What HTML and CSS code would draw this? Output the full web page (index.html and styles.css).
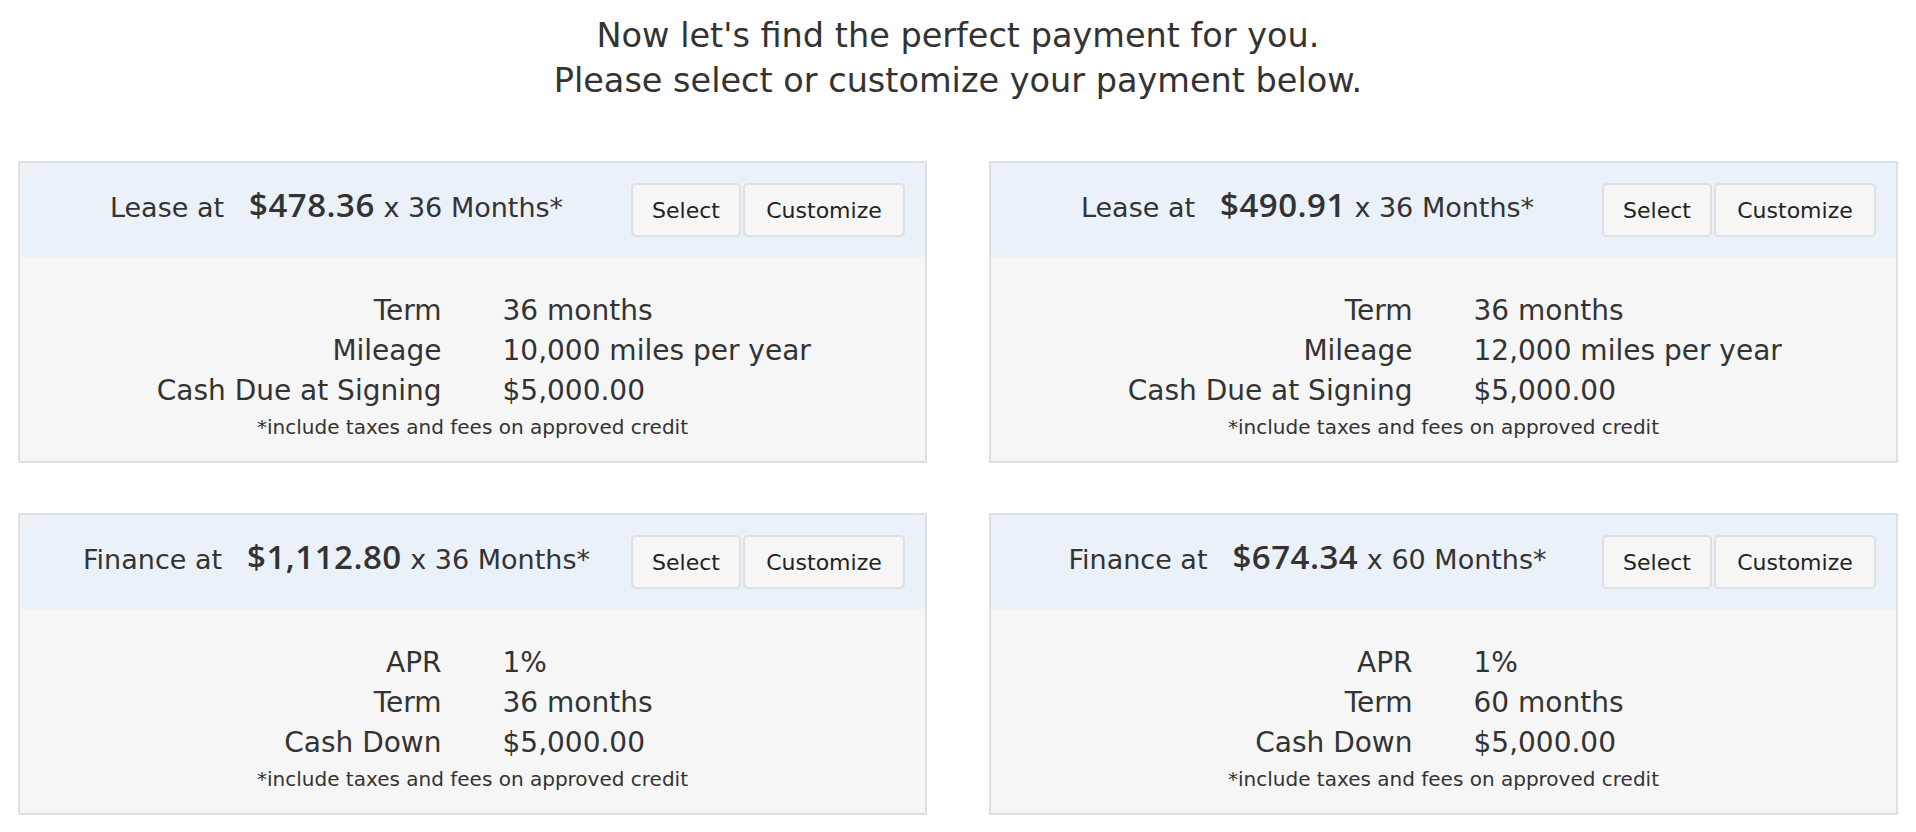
FILE: index.html
```html
<!DOCTYPE html>
<html lang="en">
<head>
<meta charset="utf-8">
<title>Payment options</title>
<link rel="stylesheet" href="styles.css">
</head>
<body>
<div class="page">
  <h1 class="intro">Now let's find the perfect payment for you.<br>Please select or customize your payment below.</h1>
  <div class="grid">
    <section class="card">
      <div class="card-head">
        <div class="summary"><span class="kind">Lease at</span><span class="price">$478.36</span> x 36 Months*</div>
        <div class="actions"><button class="btn btn-select">Select</button><button class="btn btn-customize">Customize</button></div>
      </div>
      <div class="card-body">
        <div class="rows">
          <div class="lbl">Term</div><div class="val">36 months</div>
          <div class="lbl">Mileage</div><div class="val">10,000 miles per year</div>
          <div class="lbl">Cash Due at Signing</div><div class="val">$5,000.00</div>
        </div>
        <p class="note">*include taxes and fees on approved credit</p>
      </div>
    </section>
    <section class="card">
      <div class="card-head">
        <div class="summary"><span class="kind">Lease at</span><span class="price">$490.91</span> x 36 Months*</div>
        <div class="actions"><button class="btn btn-select">Select</button><button class="btn btn-customize">Customize</button></div>
      </div>
      <div class="card-body">
        <div class="rows">
          <div class="lbl">Term</div><div class="val">36 months</div>
          <div class="lbl">Mileage</div><div class="val">12,000 miles per year</div>
          <div class="lbl">Cash Due at Signing</div><div class="val">$5,000.00</div>
        </div>
        <p class="note">*include taxes and fees on approved credit</p>
      </div>
    </section>
    <section class="card">
      <div class="card-head">
        <div class="summary"><span class="kind">Finance at</span><span class="price">$1,112.80</span> x 36 Months*</div>
        <div class="actions"><button class="btn btn-select">Select</button><button class="btn btn-customize">Customize</button></div>
      </div>
      <div class="card-body">
        <div class="rows">
          <div class="lbl">APR</div><div class="val">1%</div>
          <div class="lbl">Term</div><div class="val">36 months</div>
          <div class="lbl">Cash Down</div><div class="val">$5,000.00</div>
        </div>
        <p class="note">*include taxes and fees on approved credit</p>
      </div>
    </section>
    <section class="card">
      <div class="card-head">
        <div class="summary"><span class="kind">Finance at</span><span class="price">$674.34</span> x 60 Months*</div>
        <div class="actions"><button class="btn btn-select">Select</button><button class="btn btn-customize">Customize</button></div>
      </div>
      <div class="card-body">
        <div class="rows">
          <div class="lbl">APR</div><div class="val">1%</div>
          <div class="lbl">Term</div><div class="val">60 months</div>
          <div class="lbl">Cash Down</div><div class="val">$5,000.00</div>
        </div>
        <p class="note">*include taxes and fees on approved credit</p>
      </div>
    </section>
  </div>
</div>
</body>
</html>
```

FILE: styles.css
```css
html, body {
  margin: 0;
  padding: 0;
  background: #ffffff;
}

body {
  font-family: "DejaVu Sans", "Liberation Sans", sans-serif;
  color: #333333;
}

.page {
  padding-top: 13px;
}

.intro {
  margin: 0 0 58px;
  font-size: 33.5px;
  line-height: 45px;
  font-weight: 400;
  text-align: center;
  color: #333333;
}

.grid {
  display: grid;
  grid-template-columns: 1fr 1fr;
  column-gap: 62px;
  row-gap: 50px;
  padding: 0 18px;
}

.card {
  border: 2px solid #dfe0e2;
  background: #f6f6f6;
}

.card-head {
  display: flex;
  align-items: center;
  height: 94px;
  box-sizing: border-box;
  padding: 20px 20px;
  background: #eaf1f8;
}

.summary {
  flex: 1;
  padding-left: 2px;
  margin-bottom: 5px;
  text-align: center;
  font-size: 27px;
  line-height: 40px;
  white-space: nowrap;
  color: #333333;
}

.kind {
  margin-right: 25px;
}

.price {
  font-family: "Open Sans", "DejaVu Sans", sans-serif;
  font-weight: 600;
  font-size: 33px;
  line-height: 1;
  letter-spacing: 0.5px;
}

.actions {
  display: flex;
  gap: 2px;
}

.btn {
  height: 54px;
  padding: 0;
  font-family: "DejaVu Sans", "Liberation Sans", sans-serif;
  font-size: 22px;
  color: #222222;
  background: #f6f6f6;
  border: 2px solid #dde0e3;
  border-radius: 5px;
}

.btn-select {
  width: 110px;
}

.btn-customize {
  width: 162px;
}

.card-body {
  padding: 34px 0 22px;
}

.rows {
  display: grid;
  grid-template-columns: 1fr 1fr;
  font-size: 28px;
  line-height: 40px;
}

.lbl {
  text-align: right;
  padding-right: 31px;
}

.val {
  text-align: left;
  padding-left: 30px;
}

.note {
  margin: 4px 0 0;
  font-size: 20px;
  line-height: 24px;
  text-align: center;
}
```
